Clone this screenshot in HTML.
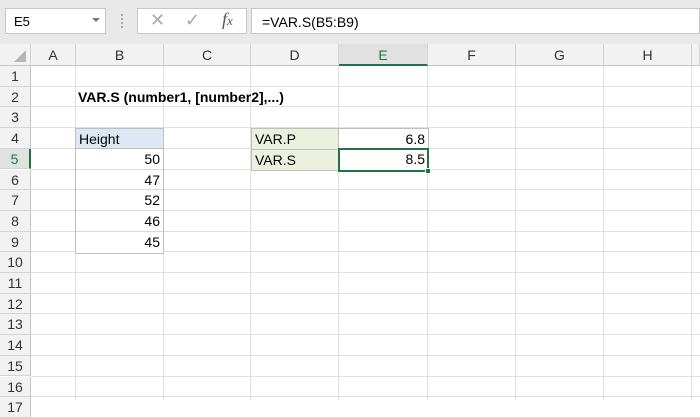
<!DOCTYPE html><html><head><style>
body{margin:0;width:700px;height:400px;overflow:hidden;background:#fff;font-family:"Liberation Sans",Calibri,sans-serif;font-size:14px;position:relative}
.a{position:absolute;box-sizing:border-box}
.ch{top:44px;height:22px;background:#f2f2f2;border-right:1px solid #d4d4d4;border-bottom:1px solid #c6c6c6;text-align:center;line-height:22px;color:#333;font-size:14px}
.rh{left:0;width:31px;background:#f2f2f2;border-bottom:1px solid #d4d4d4;border-right:1px solid #c6c6c6;text-align:center;color:#333;font-size:14px}
.gv{top:66px;bottom:0;width:1px;background:#e1e1e1}
.gh{left:31px;right:0;height:1px;background:#e1e1e1}
.bc{left:76px;width:87px;height:20.7px;text-align:right;padding-right:3px;line-height:20px;border-bottom:1px solid #d9d9d9;background:#fff}
</style></head><body>
<div class="a" style="left:0;top:0;width:700px;height:44px;background:#e9e9e9"></div>
<div class="a" style="left:5px;top:8px;width:101px;height:26px;background:#fff;border:1px solid #c6c6c6;padding:5px 8px;font-size:13px">E5</div>
<div class="a" style="left:92px;top:18px;width:0;height:0;border-left:4px solid transparent;border-right:4px solid transparent;border-top:4px solid #777"></div>
<div class="a" style="left:121px;top:14px;width:2px;height:14px;border-left:2px dotted #aaa"></div>
<div class="a" style="left:137px;top:8px;width:110px;height:26px;background:#fff;border:1px solid #c6c6c6"></div>
<div class="a" style="left:150px;top:10px;color:#aaa;font-size:18px">✕</div>
<div class="a" style="left:185px;top:10px;color:#aaa;font-size:18px">✓</div>
<div class="a" style="left:222px;top:9px;color:#555;font-size:18px;font-style:italic;font-family:'Liberation Serif',serif">f<span style="font-size:13px">x</span></div>
<div class="a" style="left:251px;top:8px;width:449px;height:26px;background:#fff;border:1px solid #c6c6c6;padding:5px 10px;font-size:14px">=VAR.S(B5:B9)</div>
<div class="a ch" style="left:0;width:31px"></div>
<div class="a" style="left:14px;top:50px;width:0;height:0;border-left:12px solid transparent;border-bottom:12px solid #b5b5b5"></div>
<div class="a ch" style="left:31px;width:45px">A</div>
<div class="a ch" style="left:76px;width:88px">B</div>
<div class="a ch" style="left:164px;width:87px">C</div>
<div class="a ch" style="left:251px;width:88px">D</div>
<div class="a ch" style="left:339px;width:89px;background:#e1e1e1;border-bottom:2px solid #217346;color:#217346">E</div>
<div class="a ch" style="left:428px;width:88px">F</div>
<div class="a ch" style="left:516px;width:88px">G</div>
<div class="a ch" style="left:604px;width:88px">H</div>
<div class="a ch" style="left:692px;width:8px"></div>
<div id="g"></div>
<script>
var h='';var cols=[76,164,251,339,428,516,604,692];
cols.forEach(function(x){h+='<div class="a gv" style="left:'+(x-1)+'px"></div>'});
for(var n=1;n<=17;n++){var t=66+(n-1)*20.7;var s=n==5?'background:#e1e1e1;color:#217346;border-right:2px solid #217346;':'';
h+='<div class="a rh" style="top:'+t+'px;height:20.7px;line-height:20px;'+s+'">'+n+'</div>';
h+='<div class="a gh" style="top:'+(t+19.7)+'px"></div>';}
document.getElementById('g').innerHTML=h;
</script>
<div class="a" style="left:78px;top:87px;font-weight:bold;font-size:14px;line-height:20px">VAR.S (number1, [number2],...)</div>
<div class="a" style="left:75px;top:128px;width:89px;height:126px;border:1px solid #bfbfbf;background:#fff"></div>
<div class="a" style="left:76px;top:129px;width:87px;height:20px;background:#dde8f4;border-bottom:1px solid #bfbfbf;padding-left:3px;line-height:20px">Height</div>
<div class="a bc" style="top:149px">50</div>
<div class="a bc" style="top:169.7px">47</div>
<div class="a bc" style="top:190.4px">52</div>
<div class="a bc" style="top:211.1px">46</div>
<div class="a bc" style="top:231.8px;border-bottom:none">45</div>
<div class="a" style="left:251px;top:128px;width:178px;height:43px;border:1px solid #bfbfbf;background:#fff"></div>
<div class="a" style="left:252px;top:129px;width:87px;height:41px;background:#ebf1de;border-right:1px solid #bfbfbf"></div>
<div class="a" style="left:252px;top:149px;width:176px;height:1px;background:#bfbfbf"></div>
<div class="a" style="left:255px;top:129px;line-height:20px">VAR.P</div>
<div class="a" style="left:255px;top:150px;line-height:20px">VAR.S</div>
<div class="a" style="left:339px;top:129px;width:89px;text-align:right;padding-right:3px;line-height:20px">6.8</div>
<div class="a" style="left:338px;top:148px;width:91px;height:24px;border:2px solid #217346;text-align:right;padding-right:2px;line-height:19px">8.5</div>
<div class="a" style="left:425px;top:168px;width:6px;height:6px;background:#217346;border:1px solid #fff"></div>
</body></html>
